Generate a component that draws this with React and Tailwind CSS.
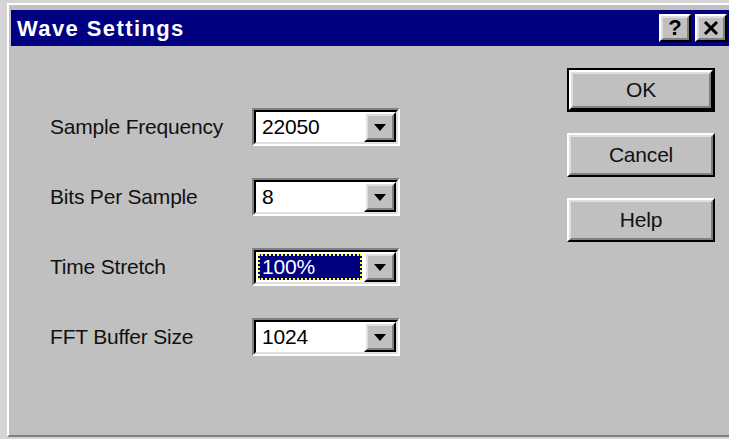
import React from 'react'

const font = { fontFamily: '"Liberation Sans", Arial, sans-serif' }

// raised 3D bevel used by push buttons and the combo arrows
const Raised = ({ className = '', children }) => (
  <div className={`border-2 border-t-white border-l-white border-b-black border-r-black ${className}`}>
    <div className="w-full h-full border-2 border-t-[#dfdfdf] border-l-[#dfdfdf] border-b-[#808080] border-r-[#808080] bg-[#c0c0c0] flex items-center justify-center">
      {children}
    </div>
  </div>
)

const Arrow = () => (
  <svg width="12" height="7" viewBox="0 0 12 7">
    <path d="M0 0h12L6 7z" fill="#000" />
  </svg>
)

const Combo = ({ value, selected }) => (
  <div className="w-[148px] h-[38px] border-2 border-t-[#808080] border-l-[#808080] border-b-white border-r-white">
    <div className="w-full h-full border-2 border-t-black border-l-black border-b-[#dfdfdf] border-r-[#dfdfdf] bg-white flex">
      <div className="flex-1 flex items-center pl-[2px] pr-[2px] py-[2px]">
        {selected ? (
          <div className="w-full h-full bg-[#000080] text-white flex items-center pl-[4px] outline-2 outline-dotted outline-[#ffff00] -outline-offset-2">
            {value}
          </div>
        ) : (
          <span className="pl-[4px] text-black">{value}</span>
        )}
      </div>
      <Raised className="w-[32px] h-full">
        <Arrow />
      </Raised>
    </div>
  </div>
)

const rows = [
  { label: 'Sample Frequency', value: '22050' },
  { label: 'Bits Per Sample', value: '8' },
  { label: 'Time Stretch', value: '100%', selected: true },
  { label: 'FFT Buffer Size', value: '1024' },
]

export default function App() {
  return (
    <div className="w-[729px] h-[439px] overflow-hidden bg-[#d4d4d4] pt-[3px] pl-[7px]" style={font}>
      <div className="h-[434px] border-t-2 border-l-2 border-t-white border-l-white border-b-2 border-b-[#808080] bg-[#c0c0c0] pt-[5px] pl-[2px] flex flex-col">
        {/* caption */}
        <div className="h-[36px] bg-[#000080] flex items-center justify-between pl-[6px] pr-[2px]">
          <span className="text-white font-bold text-[22px] tracking-[1.4px]">Wave Settings</span>
          <div className="flex gap-[4px]">
            <Raised className="w-[32px] h-[28px]">
              <span className="text-black font-bold text-[22px] leading-none">?</span>
            </Raised>
            <Raised className="w-[32px] h-[28px]">
              <svg width="16" height="14" viewBox="0 0 16 14">
                <path d="M2 1l12 12M14 1L2 13" stroke="#000" strokeWidth="3" />
              </svg>
            </Raised>
          </div>
        </div>

        <div className="flex-1 flex text-[21px] tracking-[-0.2px] text-[#111]">
          <div className="pl-[39px] pt-[62px] flex flex-col gap-[32px]">
            {rows.map((r) => (
              <div key={r.label} className="flex items-center">
                <span className="w-[202px]">{r.label}</span>
                <Combo value={r.value} selected={r.selected} />
              </div>
            ))}
          </div>

          <div className="ml-auto mr-[14px] pt-[22px] flex flex-col gap-[21px]">
            <div className="border-2 border-black">
              <Raised className="w-[144px] h-[40px]">OK</Raised>
            </div>
            <Raised className="w-[148px] h-[44px]">Cancel</Raised>
            <Raised className="w-[148px] h-[44px]">Help</Raised>
          </div>
        </div>
      </div>
    </div>
  )
}
